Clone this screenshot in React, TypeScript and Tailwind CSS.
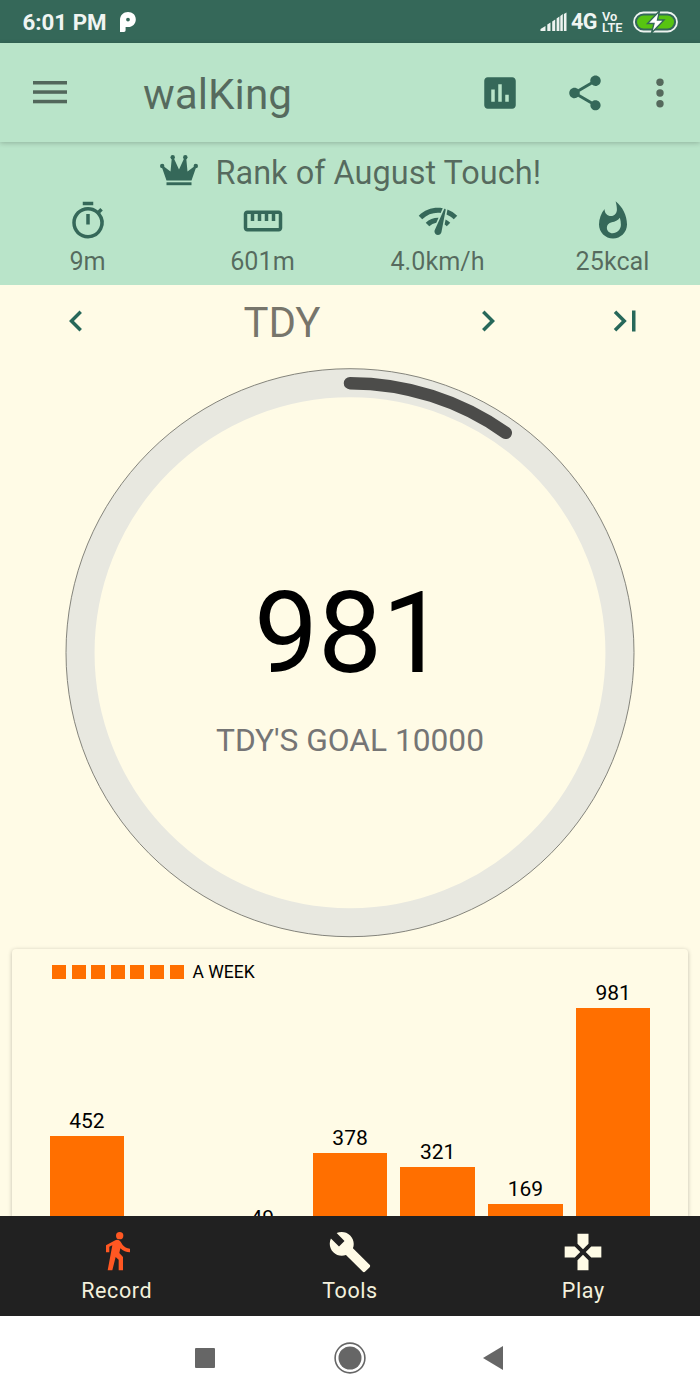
import React from "react";
import {
  MdAssessment,
  MdBuild,
  MdChevronLeft,
  MdChevronRight,
  MdGamepad,
  MdLastPage,
  MdNetworkCheck,
  MdOutlineTimer,
  MdShare,
  MdStraighten,
  MdWhatshot,
} from "react-icons/md";

function StatusBar() {
  return (
    <div className="flex h-[43px] shrink-0 items-center bg-[#356859] pl-[22.500px] pr-[22px] text-[#f0f5f2]">
      <span className="pt-[1px] text-[22.300px] leading-[42px] font-bold">6:01 PM</span>
      <svg className="ml-[13.500px]" width="16" height="20" viewBox="0 0 16 20">
        <path
          fill="#fff"
          fillRule="evenodd"
          d="M0 20V8C0 3 3.500 0 8 0s7.800 3 7.800 7.400S12.400 15 8.200 15H5.600v3.300Q5.600 20 4 20ZM8 5.700a1.900 1.900 0 1 0 0 3.800 1.900 1.900 0 0 0 0-3.800Z"
        />
      </svg>
      <svg className="ml-auto" width="27" height="20" viewBox="0 0 27 20">
        <path
          fill="#eef3f0"
          d="M.5 19v-2L5.500 14v5ZM7.300 19v-6.500l3.200-2V19ZM12.200 19V9.500l3-2V19ZM16.600 19V6.500l2.800-2V19ZM20.300 19V4l2.500-2v17ZM23.900 19V2l2.600-1.500V19Z"
        />
      </svg>
      <span className="ml-[4px] pt-[1px] text-[21.500px] leading-[42px] font-bold tracking-[-0.500px]">4G</span>
      <span className="ml-[5px] flex w-[22px] flex-col text-[12.800px] leading-[11px] font-semibold">
        <span>Vo</span>
        <span>LTE</span>
      </span>
      <svg className="ml-[9px]" width="45" height="22" viewBox="0 0 45 22">
        <rect x="1" y="1.500" width="43" height="19" rx="9.500" fill="none" stroke="#eef3f0" strokeWidth="1.800" />
        <rect x="4" y="4.500" width="37" height="13" rx="6.500" fill="#57c411" />
        <path d="M26.500 0 14.500 12.500h6.500L18.500 22 31 9h-6.500L26.500 0Z" fill="#fff" stroke="#356859" strokeWidth="1.400" />
      </svg>
    </div>
  );
}

function Toolbar() {
  return (
    <header className="z-10 flex h-[99px] shrink-0 items-center bg-[#b9e4c9] pl-[33px] shadow-[0_1px_5px_rgba(0,0,0,0.22)]">
      <svg width="34" height="24" viewBox="0 0 34 24" fill="#52675b">
        <rect y="0" width="34" height="3.500" />
        <rect y="9.300" width="34" height="3.500" />
        <rect y="18.800" width="34" height="3.500" />
      </svg>
      <h1 className="ml-[76px] pt-[4px] text-[42.300px] leading-[50px] text-black/54">walKing</h1>
      <MdAssessment className="ml-auto text-[#356859]" size={42} />
      <MdShare className="ml-[43px] text-[#356859]" size={42} />
      <svg className="mr-[36px] ml-[50px]" width="8" height="30" viewBox="0 0 8 30" fill="#55695c">
        <circle cx="4" cy="4.300" r="3.700" />
        <circle cx="4" cy="15" r="3.700" />
        <circle cx="4" cy="25.700" r="3.700" />
      </svg>
    </header>
  );
}

function Crown() {
  return (
    <svg className="-mt-[4px]" width="38" height="31" viewBox="0 0 38 31" fill="#356859">
      <path d="M6.500 25.600 1.800 12 3.200 11 10.500 16.500 11.800 3 13.700 3 19 14.500 24.300 3 26.200 3 27.500 16.500 34.800 11 36.200 12 31.500 25.600Z" />
      <rect x="6.500" y="27.300" width="25" height="2.900" />
      <circle cx="2.200" cy="11" r="2.200" />
      <circle cx="12.700" cy="2.300" r="2.200" />
      <circle cx="25.300" cy="2.300" r="2.200" />
      <circle cx="35.800" cy="11" r="2.200" />
    </svg>
  );
}

const stats = [
  { Icon: MdOutlineTimer, label: "9m" },
  { Icon: MdStraighten, label: "601m" },
  { Icon: MdNetworkCheck, label: "4.0km/h" },
  { Icon: MdWhatshot, label: "25kcal" },
];

function Summary() {
  return (
    <section className="h-[142.500px] shrink-0 bg-[#b9e4c9] pt-[9.500px] text-black/54">
      <div className="flex h-[42px] items-center justify-center pl-[1px]">
        <Crown />
        <span className="ml-[17.500px] text-[32.500px] leading-[42px]">Rank of August Touch!</span>
      </div>
      <div className="grid grid-cols-4 pt-[6.500px]">
        {stats.map(({ Icon, label }) => (
          <div key={label} className="flex flex-col items-center">
            <Icon className="text-[#356859]" size={42} />
            <span className="text-[25.200px] leading-[40px]">{label}</span>
          </div>
        ))}
      </div>
    </section>
  );
}

function DayPicker() {
  return (
    <div className="flex h-[72px] shrink-0 items-center text-[#27685a]">
      <div className="flex w-[151px] justify-center">
        <MdChevronLeft size={42} />
      </div>
      <div className="w-[262px] pt-[5px] text-center text-[42px] leading-[50px] text-black/54">TDY</div>
      <div className="flex w-[149px] justify-center">
        <MdChevronRight size={42} />
      </div>
      <div className="flex w-[125px] justify-center">
        <MdLastPage size={42} />
      </div>
    </div>
  );
}

const STEPS = 981;
const GOAL = 10000;

function GoalRing() {
  const angle = (STEPS / GOAL) * 2 * Math.PI;
  const x = 285 + 269.5 * Math.sin(angle);
  const y = 284.7 - 269.5 * Math.cos(angle);
  return (
    <div className="mx-auto mt-[11px] grid size-[570px] shrink-0">
      <svg className="col-start-1 row-start-1" width="570" height="570" viewBox="0 0 570 570" fill="none">
        <circle cx="285" cy="284.700" r="269.700" stroke="#e8e8e0" strokeWidth="28.500" />
        <circle cx="285" cy="284.700" r="284" stroke="#77776f" strokeWidth="0.900" />
        <path d={`M285 15.2A269.5 269.5 0 0 1 ${x} ${y}`} stroke="#4c4c4a" strokeWidth="12.500" strokeLinecap="round" />
      </svg>
      <div className="col-start-1 row-start-1 flex flex-col items-center pt-[198px]">
        <span className="text-[114px] leading-[134px] text-black">981</span>
        <span className="mt-[21px] text-[31.700px] leading-[40px] text-[#757575]">TDY'S GOAL 10000</span>
      </div>
    </div>
  );
}

const week = [452, null, 49, 378, 321, 169, 981];

function WeekChart() {
  return (
    <section className="mx-[12px] mt-[11px] h-[268px] shrink-0 rounded-t-[4px] bg-[#fffbe6] shadow-[0_1px_4px_rgba(0,0,0,0.25)]">
      <div className="flex h-[46px] items-center pl-[40px]">
        <div className="flex gap-[5.600px]">
          {week.map((_, i) => (
            <span key={i} className="size-[14px] bg-[#ff6f00]" />
          ))}
        </div>
        <span className="ml-[9px] text-[17.500px] leading-[20px] text-black">A WEEK</span>
      </div>
      <div className="flex h-[250px] items-end gap-[13.100px] pl-[37.700px]">
        {week.map((value, i) => (
          <div key={i} className="flex w-[74.600px] shrink-0 flex-col items-center">
            {value !== null && <span className="text-[21px] leading-[30px] text-black">{value}</span>}
            {value !== null && <div className="w-full bg-[#ff6f00]" style={{ height: value * 0.241 }} />}
          </div>
        ))}
      </div>
    </section>
  );
}

function WalkIcon({ className, size }: { className?: string; size: number }) {
  return (
    <svg className={className} width={size} height={size} viewBox="0 0 132 132" fill="currentColor">
      <circle cx="74" cy="17" r="11" />
      <path d="M33 46 58 32Q70 26 77 35L83 45Q90 54 105 56V67Q88 67 76 55L73 69 84 81V121H71V89L62 81 52 121H38L52 46 43 50V67H33Z" />
    </svg>
  );
}

const tabs = [
  { Icon: WalkIcon, label: "Record", color: "text-[#ff5722]" },
  { Icon: MdBuild, label: "Tools", color: "text-[#fffbe6]" },
  { Icon: MdGamepad, label: "Play", color: "text-[#fffbe6]" },
];

function BottomTabs() {
  return (
    <nav className="grid h-[99.500px] shrink-0 grid-cols-3 bg-[#212121] pt-[14px]">
      {tabs.map(({ Icon, label, color }) => (
        <div key={label} className="flex flex-col items-center">
          <Icon className={color} size={44} />
          <span className="mt-[2px] text-[21.500px] leading-[30px] tracking-[0.600px] text-[#f3f0dc]">{label}</span>
        </div>
      ))}
    </nav>
  );
}

function SystemNav() {
  return (
    <div className="flex h-[84.500px] shrink-0 items-center bg-white pl-[194.500px]">
      <div className="size-[20.500px] rounded-[1px] bg-[#666]" />
      <svg className="ml-[119px]" width="32" height="32" viewBox="0 0 32 32">
        <circle cx="16" cy="16" r="14.900" fill="none" stroke="#666" strokeWidth="1.600" />
        <circle cx="16" cy="16" r="11.500" fill="#666" />
      </svg>
      <svg className="ml-[116.500px]" width="20" height="24" viewBox="0 0 20 24">
        <path d="M0 12 20 0v24Z" fill="#666" />
      </svg>
    </div>
  );
}

export default function App() {
  return (
    <div className="flex h-[1400px] w-[700px] flex-col overflow-hidden bg-[#fffbe6] font-['Roboto',sans-serif]">
      <StatusBar />
      <Toolbar />
      <Summary />
      <main className="flex h-[931.500px] shrink-0 flex-col overflow-hidden">
        <DayPicker />
        <GoalRing />
        <WeekChart />
      </main>
      <BottomTabs />
      <SystemNav />
    </div>
  );
}
